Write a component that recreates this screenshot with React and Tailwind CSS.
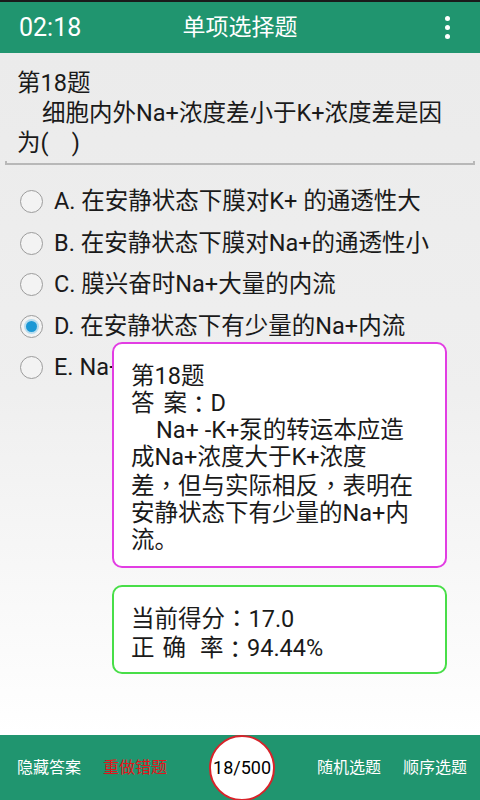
import React from "react";

const FONT = { fontFamily: 'Roboto, "Noto Sans CJK SC", sans-serif' };
const TC = { fontFamily: '"Noto Sans CJK TC", sans-serif' };

function P({ children }) {
  return <span style={TC}>{children}</span>;
}

function Radio({ checked }) {
  return (
    <div className="w-[23px] h-[23px] rounded-full border-[1.5px] border-[#9c9c9c] bg-[#f3f3f3] flex items-center justify-center shrink-0">
      {checked && (
        <div className="w-[15px] h-[15px] rounded-full bg-[#b7dcee] flex items-center justify-center">
          <div className="w-[11px] h-[11px] rounded-full bg-[#1b98d5]" />
        </div>
      )}
    </div>
  );
}

const options = [
  { t: "A. 在安静状态下膜对K+ 的通透性大" },
  { t: "B. 在安静状态下膜对Na+的通透性小" },
  { t: "C. 膜兴奋时Na+大量的内流" },
  { t: "D. 在安静状态下有少量的Na+内流", checked: true },
  { t: "E. Na+-K+泵的作用" },
];

export default function App() {
  return (
    <div className="w-[480px] h-[800px] flex flex-col overflow-hidden text-[#1a1a1a]" style={FONT}>
      <div className="h-[2px] bg-[#1a1a1a]" />
      <div className="h-[51px] bg-[#20956f] flex items-center text-white">
        <div className="w-[120px] pl-[19px] text-[25px] leading-none">02:18</div>
        <div className="flex-1 text-center text-[23px] leading-none">单项选择题</div>
        <div className="w-[120px] flex justify-end pr-[30px]">
          <div className="flex flex-col gap-[4px]">
            <div className="w-[5px] h-[5px] rounded-full bg-white" />
            <div className="w-[5px] h-[5px] rounded-full bg-white" />
            <div className="w-[5px] h-[5px] rounded-full bg-white" />
          </div>
        </div>
      </div>

      <div className="flex-1 relative bg-linear-to-b from-[#ebebeb] via-[#efefef] to-white">
        <div className="pt-[15px] px-[17px] text-[23.5px] leading-[30px]">
          <div>第18题</div>
          <div className="pl-[25px] whitespace-nowrap">细胞内外Na+浓度差小于K+浓度差是因</div>
          <div className="whitespace-pre">为(    )</div>
        </div>
        <div className="mx-[5px] mt-[3px] h-[4px] border-x-2 border-b-2 border-[#b8b8b8]" />

        <div className="mt-[16px]">
          {options.map((o) => (
            <div key={o.t} className="h-[41.5px] flex items-center pl-[20px] gap-[11px]">
              <Radio checked={o.checked} />
              <span className="text-[23.5px] leading-none whitespace-nowrap">{o.t}</span>
            </div>
          ))}
        </div>

        <div className="absolute left-[112px] top-[289px] w-[335px] h-[226px] rounded-[10px] border-2 border-[#e23de3] bg-white pl-[17px] pt-[19px] text-[23.5px] leading-[27px]">
          <div>第18题</div>
          <div className="flex">
            <span>答</span>
            <span className="ml-[9px]">案</span>
            <P>：</P>
            <span>D</span>
          </div>
          <div className="pl-[25px] whitespace-nowrap">Na+ -K+泵的转运本应造</div>
          <div className="whitespace-nowrap">成Na+浓度大于K+浓度</div>
          <div className="whitespace-nowrap">
            差<P>，</P>但与实际相反<P>，</P>表明在
          </div>
          <div className="whitespace-nowrap">安静状态下有少量的Na+内</div>
          <div>流。</div>
        </div>

        <div className="absolute left-[112px] top-[532px] w-[335px] h-[89px] rounded-[10px] border-2 border-[#48de48] bg-white pl-[17px] pt-[16px] text-[23.5px] leading-[29px]">
          <div>
            当前得分<P>：</P>17.0
          </div>
          <div className="flex">
            <span>正</span>
            <span className="ml-[8px]">确</span>
            <span className="ml-[14px]">率</span>
            <P>：</P>
            <span>94.44%</span>
          </div>
        </div>
      </div>

      <div className="h-[65px] bg-[#20956f] flex items-center text-[16px] leading-none">
        <span className="ml-[17px] text-white">隐藏答案</span>
        <span className="ml-[22px] text-[#e3141b]">重做错题</span>
        <div className="ml-[42px] w-[66px] h-[66px] rounded-full bg-white border-2 border-[#d8232a] flex items-center justify-center text-black text-[18px]">
          18/500
        </div>
        <span className="ml-[42px] text-white">随机选题</span>
        <span className="ml-[22px] text-white">顺序选题</span>
      </div>
    </div>
  );
}
